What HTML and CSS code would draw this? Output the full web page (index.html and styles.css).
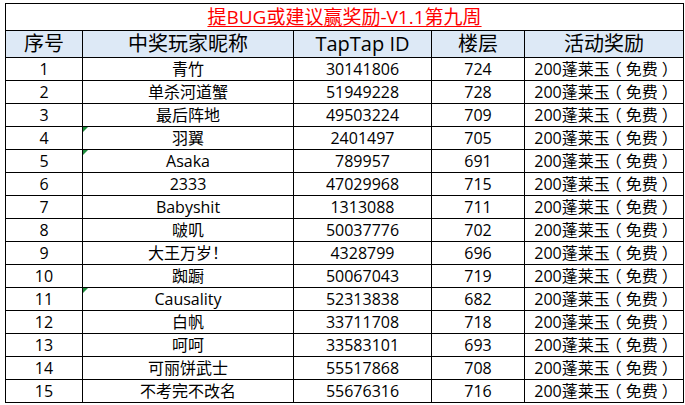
FILE: index.html
```html
<!DOCTYPE html>
<html lang="zh-CN">
<head>
<meta charset="utf-8">
<link rel="stylesheet" href="styles.css">
</head>
<body>
<table class="sheet">
  <colgroup>
    <col class="c-no">
    <col class="c-name">
    <col class="c-id">
    <col class="c-floor">
    <col class="c-prize">
  </colgroup>
  <tr class="title-row"><td colspan="5"><span class="title">提BUG或建议赢奖励-V1.1第九周</span></td></tr>
  <tr class="head-row"><th>序号</th><th>中奖玩家昵称</th><th>TapTap ID</th><th>楼层</th><th>活动奖励</th></tr>
  <tr><td>1</td><td>青竹</td><td>30141806</td><td>724</td><td>200蓬莱玉<span class="p">（</span>免费<span class="p">）</span></td></tr>
  <tr><td>2</td><td>单杀河道蟹</td><td>51949228</td><td>728</td><td>200蓬莱玉<span class="p">（</span>免费<span class="p">）</span></td></tr>
  <tr><td>3</td><td>最后阵地</td><td>49503224</td><td>709</td><td>200蓬莱玉<span class="p">（</span>免费<span class="p">）</span></td></tr>
  <tr><td>4</td><td class="flag">羽翼</td><td>2401497</td><td>705</td><td>200蓬莱玉<span class="p">（</span>免费<span class="p">）</span></td></tr>
  <tr><td>5</td><td class="flag">Asaka</td><td>789957</td><td>691</td><td>200蓬莱玉<span class="p">（</span>免费<span class="p">）</span></td></tr>
  <tr><td>6</td><td>2333</td><td>47029968</td><td>715</td><td>200蓬莱玉<span class="p">（</span>免费<span class="p">）</span></td></tr>
  <tr><td>7</td><td>Babyshit</td><td>1313088</td><td>711</td><td>200蓬莱玉<span class="p">（</span>免费<span class="p">）</span></td></tr>
  <tr><td>8</td><td>啵叽</td><td>50037776</td><td>702</td><td>200蓬莱玉<span class="p">（</span>免费<span class="p">）</span></td></tr>
  <tr><td>9</td><td>大王万岁！</td><td>4328799</td><td>696</td><td>200蓬莱玉<span class="p">（</span>免费<span class="p">）</span></td></tr>
  <tr><td>10</td><td>踟蹰</td><td>50067043</td><td>719</td><td>200蓬莱玉<span class="p">（</span>免费<span class="p">）</span></td></tr>
  <tr><td>11</td><td class="flag">Causality</td><td>52313838</td><td>682</td><td>200蓬莱玉<span class="p">（</span>免费<span class="p">）</span></td></tr>
  <tr><td>12</td><td>白帆</td><td>33711708</td><td>718</td><td>200蓬莱玉<span class="p">（</span>免费<span class="p">）</span></td></tr>
  <tr><td>13</td><td>呵呵</td><td>33583101</td><td>693</td><td>200蓬莱玉<span class="p">（</span>免费<span class="p">）</span></td></tr>
  <tr><td>14</td><td>可丽饼武士</td><td>55517868</td><td>708</td><td>200蓬莱玉<span class="p">（</span>免费<span class="p">）</span></td></tr>
  <tr><td>15</td><td>不考完不改名</td><td>55676316</td><td>716</td><td>200蓬莱玉<span class="p">（</span>免费<span class="p">）</span></td></tr>
</table>
</body>
</html>
```
FILE: styles.css
```css
html, body {
  margin: 0;
  padding: 0;
  background: #ffffff;
}
body {
  padding: 3px 0 0 5px;
  font-family: "Open Sans", "Noto Sans CJK SC", sans-serif;
  color: #000;
}
.sheet {
  border-collapse: collapse;
  table-layout: fixed;
  width: 678px;
}
.c-no { width: 77px; }
.c-name { width: 211px; }
.c-id { width: 138px; }
.c-floor { width: 93px; }
.c-prize { width: 159px; }
.sheet td, .sheet th {
  border: 1px solid #000;
  padding: 0;
  text-align: center;
  vertical-align: middle;
  white-space: nowrap;
  overflow: hidden;
  font-size: 16px;
  font-weight: normal;
  line-height: 1;
  height: 22px;
}
.title-row td {
  height: 26px;
}
.title {
  color: #ff0000;
  font-size: 19px;
  text-decoration: underline;
  text-underline-offset: 2px;
}
.head-row th {
  height: 26px;
  background: #dde9f6;
  font-size: 20px;
}
.p {
  display: inline-block;
  width: 1em;
  text-align: center;
  font-feature-settings: "halt";
}
.sheet td.flag {
  position: relative;
}
.flag::before {
  content: "";
  position: absolute;
  left: 0;
  top: 0;
  border-top: 5px solid #1e8c3c;
  border-right: 5px solid transparent;
}
```
